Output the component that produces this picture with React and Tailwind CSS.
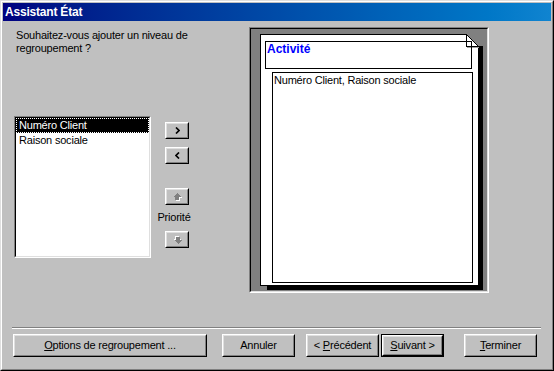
import React from 'react';

// bouton Windows en relief
const Raised = ({ className = '', children }) => (
  <div className={`border border-t-white border-l-white border-r-black border-b-black ${className}`}>
    <div className="flex h-full w-full items-center justify-center border border-t-[#dfdfdf] border-l-[#dfdfdf] border-r-[#808080] border-b-[#808080]">
      {children}
    </div>
  </div>
);

const Chevron = ({ dir }) => (
  <svg width="5" height="7" viewBox="0 0 5 7">
    <path
      d={dir === 'right' ? 'M1 0.5 L4 3.5 L1 6.5' : 'M4 0.5 L1 3.5 L4 6.5'}
      fill="none"
      stroke="#000"
      strokeWidth="1.7"
    />
  </svg>
);

const Arrow = ({ down }) => {
  const d = 'M4 0 L8 4 L6 4 L6 7 L2 7 L2 4 L0 4 Z';
  return (
    <svg width="9" height="8" viewBox="0 0 9 8" shapeRendering="crispEdges" className={down ? 'rotate-180' : ''}>
      <path d={d} fill="#fff" transform="translate(1,1)" />
      <path d={d} fill="#808080" />
    </svg>
  );
};

const App = () => {
  return (
    <div className="h-[371px] w-[554px] border border-t-[#dfdfdf] border-l-[#dfdfdf] border-r-black border-b-black bg-[#c0c0c0] font-['Liberation_Sans',Arial,sans-serif] text-[11px] tracking-[-0.2px] text-black">
      <div className="flex h-full w-full flex-col border border-t-white border-l-white border-r-[#808080] border-b-[#808080] p-px">
        {/* barre de titre */}
        <div className="flex h-[18px] items-center bg-linear-to-r from-[#000080] to-[#1084d0] pl-[2px] text-[12px] font-bold text-white">
          Assistant État
        </div>

        {/* contenu */}
        <div className="flex h-[306px]">
          <div className="w-[246px]">
            <p className="mt-[8px] pl-[13px] leading-[13px]">
              Souhaitez-vous ajouter un niveau de
              <br />
              regroupement ?
            </p>
            <div className="ml-[11px] mt-[61px] flex">
              {/* liste des champs */}
              <div className="h-[142px] w-[137px] border border-t-[#808080] border-l-[#808080] border-r-white border-b-white">
                <div className="h-full w-full border border-t-black border-l-black border-r-[#dfdfdf] border-b-[#dfdfdf] bg-white">
                  <div className="h-[15px] border border-dotted border-white bg-black pl-[2px] leading-[13px] text-white">
                    Numéro Client
                  </div>
                  <div className="h-[15px] pl-[3px] leading-[15px]">Raison sociale</div>
                </div>
              </div>

              {/* boutons de déplacement */}
              <div className="ml-[14px] flex w-[24px] flex-col items-center">
                <Raised className="mt-[6px] h-[17px] w-[24px]">
                  <Chevron dir="right" />
                </Raised>
                <Raised className="mt-[8px] h-[17px] w-[24px]">
                  <Chevron dir="left" />
                </Raised>
                <Raised className="mt-[24px] h-[17px] w-[24px]">
                  <Arrow />
                </Raised>
                <span className="mr-[6px] mt-[6px] w-max leading-[13px]">Priorité</span>
                <Raised className="mt-[7px] h-[17px] w-[24px]">
                  <Arrow down />
                </Raised>
              </div>
            </div>
          </div>

          {/* aperçu */}
          <div className="mt-[6px] h-[266px] w-[240px] border border-t-[#808080] border-l-[#808080] border-r-white border-b-white">
            <div className="relative h-full w-full border border-t-black border-l-black border-r-[#dfdfdf] border-b-[#dfdfdf] bg-[#808080]">
              <svg className="absolute left-0 top-0" width="236" height="262" shapeRendering="crispEdges">
                <rect x="228" y="17" width="4" height="244" fill="#000" />
                <rect x="16" y="257" width="216" height="4" fill="#000" />
                <polygon points="9.5,5.5 215.5,5.5 227.5,17.5 227.5,256.5 9.5,256.5" fill="#fff" stroke="#000" />
                <polygon points="215.5,5.5 215.5,17.5 227.5,17.5" fill="#fff" stroke="#000" />
                <rect x="216" y="18" width="12" height="1" fill="#a0a0a0" />
              </svg>
              <div className="relative pl-[14px] pt-[12px]">
                <div className="h-[28px] w-[207px] border border-black pl-px text-[12px] font-bold leading-[14px] tracking-normal text-[#0000ff]">
                  Activité
                </div>
                <div className="ml-[7px] mt-[3px] h-[211px] w-[201px] border border-black pl-px pt-px leading-[13px]">
                  Numéro Client, Raison sociale
                </div>
              </div>
            </div>
          </div>
        </div>

        {/* séparateur */}
        <div className="ml-[9px] h-[2px] w-[529px] border-t border-b border-t-[#808080] border-b-white" />

        {/* boutons */}
        <div className="ml-[10px] mt-[5px] flex h-[23px]">
          <Raised className="w-[194px]">
            <span>
              <span className="underline">O</span>ptions de regroupement ...
            </span>
          </Raised>
          <Raised className="ml-[15px] w-[73px]">Annuler</Raised>
          <Raised className="ml-[11px] w-[73px]">
            <span>
              &lt; <span className="underline">P</span>récédent
            </span>
          </Raised>
          <div className="ml-[2px] w-[63px] border border-black">
            <Raised className="h-full w-full">
              <span>
                <span className="underline">S</span>uivant &gt;
              </span>
            </Raised>
          </div>
          <Raised className="ml-[20px] w-[73px]">
            <span>
              <span className="underline">T</span>erminer
            </span>
          </Raised>
        </div>
      </div>
    </div>
  );
};

export default App;
